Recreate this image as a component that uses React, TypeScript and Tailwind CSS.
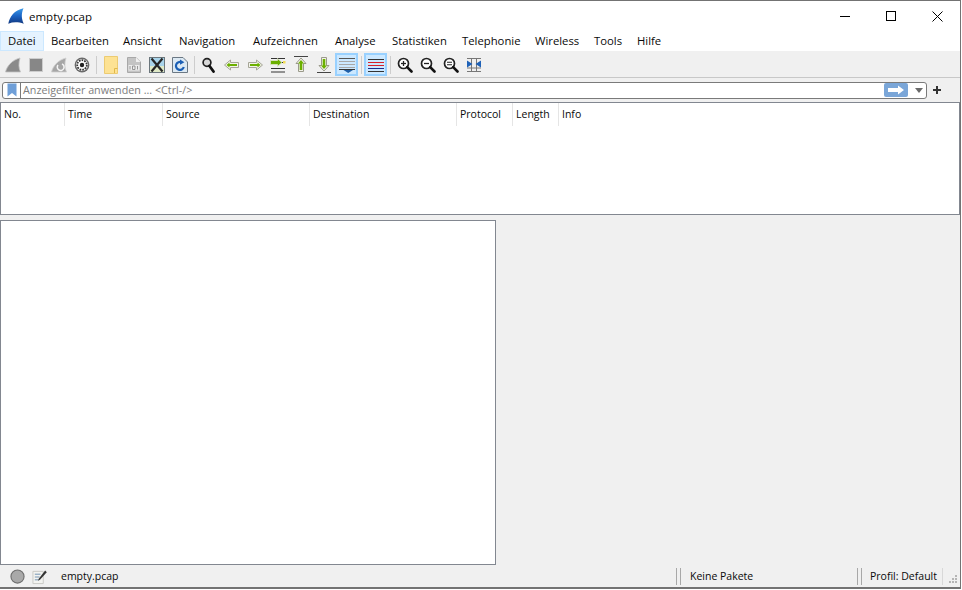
import type { ReactNode } from "react";

const menus = [
  { name: "Datei", cls: "w-[44px] pl-[7px] bg-[#e5f3ff] border border-[#cce8ff]" },
  { name: "Bearbeiten", cls: "w-[71px] pl-[7px]" },
  { name: "Ansicht", cls: "w-[56px] pl-[8px]" },
  { name: "Navigation", cls: "w-[74px] pl-[8px]" },
  { name: "Aufzeichnen", cls: "w-[82px] pl-[8px]" },
  { name: "Analyse", cls: "w-[57px] pl-[8px]" },
  { name: "Statistiken", cls: "w-[70px] pl-[8px]" },
  { name: "Telephonie", cls: "w-[73px] pl-[8px]" },
  { name: "Wireless", cls: "w-[59px] pl-[8px]" },
  { name: "Tools", cls: "w-[43px] pl-[8px]" },
  { name: "Hilfe", cls: "w-[41px] pl-[8px]" },
];

const columns = [
  { name: "No.", width: "w-[64px]" },
  { name: "Time", width: "w-[98px]" },
  { name: "Source", width: "w-[147px]" },
  { name: "Destination", width: "w-[147px]" },
  { name: "Protocol", width: "w-[56px]" },
  { name: "Length", width: "w-[46px]" },
];

const Glass = ({ sign }: { sign: "plus" | "minus" | "equal" }) => (
  <svg width="16" height="16" viewBox="0 0 16 16">
    <circle cx="6.5" cy="6.5" r="5" fill="#fff" stroke="#222" strokeWidth="1.7" />
    <path d="M10.2 10.2 L14.5 14.5" stroke="#111" strokeWidth="2.6" strokeLinecap="round" />
    {sign !== "equal" && <path d="M4 6.5 H9" stroke="#222" strokeWidth="1.3" />}
    {sign === "equal" && <path d="M4 5.3 H9 M4 7.7 H9" stroke="#222" strokeWidth="1.1" />}
    {sign === "plus" && <path d="M6.5 4 V9" stroke="#222" strokeWidth="1.3" />}
  </svg>
);

const Arrow = ({ flip }: { flip?: boolean }) => (
  <svg width="16" height="16" viewBox="0 0 16 16">
    <g transform={flip ? "rotate(180 8 8)" : undefined}>
      <path d="M15.5 8 L9.5 3 V5.5 H1.5 V10.5 H9.5 V13 Z" fill="#f2f2ea" stroke="#a5a596" strokeWidth="1" />
      <path d="M13.5 8 L10.5 5.5 V7 H3 V9 H10.5 V10.5 Z" fill="#6cb000" />
    </g>
  </svg>
);

const VerticalArrow = ({ up }: { up?: boolean }) => (
  <svg width="16" height="17" viewBox="0 0 16 17">
    <path d={up ? "M1 0.5 H15" : "M1 16.5 H15"} stroke="#444" strokeWidth="1" />
    <g transform={up ? undefined : "rotate(180 8 8.5)"}>
      <path d="M8 2 L13 7.5 H10.5 V15.5 H5.5 V7.5 H3 Z" fill="#f2f2ea" stroke="#9a9a8a" strokeWidth="1" />
      <path d="M8 4 L11 7.5 H9.3 V14 H6.7 V7.5 H5 Z" fill="#6cb000" />
    </g>
  </svg>
);

const icons: { key: string; node?: ReactNode; active?: boolean }[] = [
  {
    key: "start",
    node: (
      <svg width="16" height="16" viewBox="0 0 16 16">
        <path d="M0.5 15 C2 9 7 3 15 1 C13.5 6 13.5 11 15.5 15 Z" fill="#8a8a8a" stroke="#c4c4c4" strokeWidth="0.8" />
      </svg>
    ),
  },
  {
    key: "stop",
    node: (
      <svg width="16" height="16" viewBox="0 0 16 16">
        <rect x="1.5" y="1.5" width="13" height="13" fill="#878787" stroke="#cdcdcd" />
      </svg>
    ),
  },
  {
    key: "restart",
    node: (
      <svg width="16" height="16" viewBox="0 0 16 16">
        <path d="M0.5 15 C2 9 7 3 15 1 C13.5 6 13.5 11 15.5 15 Z" fill="#a6a6a6" stroke="#cfcfcf" strokeWidth="0.8" />
        <path d="M11 7 A3.4 3.4 0 1 1 7 8" fill="none" stroke="#f4f4f4" strokeWidth="1.5" />
      </svg>
    ),
  },
  {
    key: "options",
    node: (
      <svg width="16" height="16" viewBox="0 0 16 16">
        <circle cx="8" cy="8" r="7.4" fill="#6a6a6a" />
        <circle cx="8" cy="8" r="6" fill="#fff" />
        <circle cx="8" cy="8" r="4.8" fill="none" stroke="#333" strokeWidth="1.8" strokeDasharray="1.7 1" />
        <circle cx="8" cy="8" r="2.2" fill="#222" />
      </svg>
    ),
  },
  { key: "sep1" },
  {
    key: "open",
    node: (
      <svg width="14" height="18" viewBox="0 0 14 18">
        <path d="M0.5 0.5 H13.5 V17.5 H0.5 Z" fill="#fde293" stroke="#eccb72" />
        <path d="M10.5 17 V12.5 H13.5" fill="none" stroke="#e2b949" />
      </svg>
    ),
  },
  {
    key: "save",
    node: (
      <svg width="14" height="16" viewBox="0 0 14 16">
        <path d="M0.5 0.5 H9 L13.5 5 V15.5 H0.5 Z" fill="#c4c4c4" stroke="#a8a8a8" />
        <path d="M9 0.5 V5 H13.5 Z" fill="#f0f0f0" />
        <rect x="1.5" y="8" width="11" height="5.5" fill="#ededed" />
        <path d="M3 9 V12.5 M5.5 9 H8 V12.5 H5.5 Z M10.5 9 V12.5" stroke="#808080" strokeWidth="0.8" fill="none" />
      </svg>
    ),
  },
  {
    key: "close",
    node: (
      <svg width="16" height="16" viewBox="0 0 16 16">
        <rect x="0.5" y="0.5" width="15" height="15" fill="#a9d4ea" stroke="#6b767c" />
        <rect x="1" y="9" width="14" height="6" fill="#dfe9c6" />
        <path d="M2.5 1.5 L13.5 14.5 M13.5 1.5 L2.5 14.5" stroke="#262626" strokeWidth="2.2" />
      </svg>
    ),
  },
  {
    key: "reload",
    node: (
      <svg width="16" height="16" viewBox="0 0 16 16">
        <path d="M0.5 0.5 H11 L15.5 5 V15.5 H0.5 Z" fill="#dce9f3" stroke="#6b7884" />
        <path d="M11.8 10 A4 4 0 1 1 9.6 5.2" fill="none" stroke="#1b5fb5" strokeWidth="2.2" />
        <path d="M8 2.4 L12.4 5.2 L8 7.8 Z" fill="#1b5fb5" />
      </svg>
    ),
  },
  { key: "sep2" },
  {
    key: "find",
    node: (
      <svg width="16" height="16" viewBox="0 0 16 16">
        <circle cx="6" cy="5.5" r="3.9" fill="#d8d8d8" stroke="#222" strokeWidth="1.7" />
        <path d="M8.5 9 L12.5 14.5" stroke="#111" strokeWidth="2.8" strokeLinecap="round" />
      </svg>
    ),
  },
  { key: "back", node: <Arrow flip /> },
  { key: "forward", node: <Arrow /> },
  {
    key: "goto",
    node: (
      <svg width="16" height="16" viewBox="0 0 16 16">
        <path d="M1 1.5 H15 M9 5.5 H15 M1 11.5 H15 M1 15 H15" stroke="#333" strokeWidth="1" />
        <path d="M12 5.5 L7.5 1.5 V3.5 H0.5 V7.5 H7.5 V9.5 Z" fill="#6cb000" stroke="#dfe6cc" strokeWidth="0.8" />
        <rect x="13" y="4" width="2.5" height="2.5" fill="#f2dc55" />
      </svg>
    ),
  },
  { key: "first", node: <VerticalArrow up /> },
  { key: "last", node: <VerticalArrow /> },
  {
    key: "autoscroll",
    active: true,
    node: (
      <svg width="16" height="16" viewBox="0 0 16 16">
        <path d="M0 1.5 H16" stroke="#555" strokeWidth="1" />
        <path d="M0 4.5 H16 M0 7.5 H16 M0 10.5 H16" stroke="#a8a8a8" strokeWidth="1" />
        <path d="M0 12.5 H16" stroke="#333" strokeWidth="1" />
        <path d="M4.5 13 H14 L9.2 16 Z" fill="#1f5fa8" />
      </svg>
    ),
  },
  { key: "sep3" },
  {
    key: "colorize",
    active: true,
    node: (
      <svg width="16" height="16" viewBox="0 0 16 16">
        <path d="M0 2.5 H16" stroke="#333" strokeWidth="1" />
        <path d="M0 5.5 H16 M0 8.5 H16" stroke="#d8202a" strokeWidth="1" />
        <path d="M0 11.5 H16" stroke="#1c2d8c" strokeWidth="1" />
        <path d="M0 14.5 H16" stroke="#333" strokeWidth="1" />
      </svg>
    ),
  },
  { key: "sep4" },
  { key: "zoomin", node: <Glass sign="plus" /> },
  { key: "zoomout", node: <Glass sign="minus" /> },
  { key: "zoomreset", node: <Glass sign="equal" /> },
  {
    key: "resize",
    node: (
      <svg width="16" height="16" viewBox="0 0 16 16">
        <path d="M1 1.5 H15 M1 14.5 H15 M1 11 H15 M5.5 1.5 V14.5 M10.5 1.5 V14.5" stroke="#777" strokeWidth="1" fill="none" />
        <path d="M1 3.5 L6.5 7 L1 10.5 Z M15 3.5 L9.5 7 L15 10.5 Z" fill="#1f62b8" />
      </svg>
    ),
  },
];

const StatusDivider = () => (
  <div className="flex gap-[3px] h-[17px] shrink-0">
    <div className="w-px bg-[#a8a8a8]" />
    <div className="w-px bg-[#a8a8a8]" />
  </div>
);

export default function App() {
  return (
    <div className="h-[590px] w-[962px] bg-white overflow-hidden">
      <div
        className="h-[589px] w-[961px] flex flex-col bg-[#f0f0f0] border-t border-r border-[#737373] text-[10.5px] text-[#0a0a0a]"
        style={{ fontFamily: '"Open Sans", "Liberation Sans", sans-serif' }}
      >
        {/* Title bar */}
        <div className="h-[30px] shrink-0 bg-white flex items-center">
          <div className="w-[29px] flex justify-start pl-[8px]">
            <svg width="16" height="16" viewBox="0 0 16 16">
              <defs>
                <linearGradient id="fin" x1="0" y1="0" x2="0" y2="1">
                  <stop offset="0" stopColor="#3a9ae8" />
                  <stop offset="0.5" stopColor="#1a63c4" />
                  <stop offset="1" stopColor="#12387f" />
                </linearGradient>
              </defs>
              <path d="M0.3 15.7 C1.5 9 6.5 2 15.5 0.3 C13 6 13.5 11 15.8 15.7 C10 13.8 5 13.8 0.3 15.7 Z" fill="url(#fin)" />
            </svg>
          </div>
          <span className="text-[11.5px] pt-px">empty.pcap</span>
          <div className="ml-auto flex items-center">
            <div className="w-[46px] flex justify-center">
              <div className="w-[10px] h-px bg-black" />
            </div>
            <div className="w-[46px] flex justify-center">
              <div className="w-[10px] h-[10px] border border-black" />
            </div>
            <div className="w-[46px] flex justify-center">
              <svg width="11" height="11" viewBox="0 0 11 11">
                <path d="M0.5 0.5 L10.5 10.5 M10.5 0.5 L0.5 10.5" stroke="#000" strokeWidth="1" />
              </svg>
            </div>
          </div>
        </div>

        {/* Menu bar */}
        <div className="h-[21px] shrink-0 bg-white flex items-stretch border-b border-b-[#f0f0f0] text-[11.3px]">
          {menus.map((m) => (
            <div key={m.name} className={`${m.cls} shrink-0 flex items-center pt-px`}>
              {m.name}
            </div>
          ))}
        </div>

        {/* Main toolbar */}
        <div className="h-[26px] shrink-0 flex items-center pl-px border-b border-[#c8c8c8]">
          {icons.map((ic) =>
            ic.node ? (
              <div
                key={ic.key}
                className={
                  ic.active
                    ? "w-[23px] h-[23px] flex items-center justify-center bg-[#cce8ff] border-2 border-[#99d1ff]"
                    : "w-[23px] h-[23px] flex items-center justify-center"
                }
              >
                {ic.node}
              </div>
            ) : (
              <div key={ic.key} className="w-[6px] flex justify-center">
                <div className="w-px h-[18px] bg-[#cdcdcd]" />
              </div>
            ),
          )}
        </div>

        {/* Display filter */}
        <div className="h-[24px] shrink-0 flex items-center pl-[2px] pr-[16px] gap-[3px]">
          <div className="flex-1 h-[17px] bg-white border border-[#7a7a7a] rounded-[3px] flex items-center">
            <div className="w-[18px] h-full flex items-center justify-center border-r border-[#7a7a7a]">
              <svg width="10" height="14" viewBox="0 0 10 14">
                <path d="M0.5 0.5 H9.5 V13.5 L5 10 L0.5 13.5 Z" fill="#6f9fd8" />
              </svg>
            </div>
            <span className="pl-[2px] text-[#7d7d7d] text-[10.75px]">Anzeigefilter anwenden ... &lt;Ctrl-/&gt;</span>
            <div className="ml-auto w-[24px] h-[14px] rounded-[2px] bg-[#7aa6d8] flex items-center justify-center">
              <svg width="18" height="10" viewBox="0 0 18 10">
                <path d="M1 3 H11 V0.5 L17 5 L11 9.5 V7 H1 Z" fill="#fff" />
              </svg>
            </div>
            <div className="w-[18px] flex justify-center pl-[3px]">
              <svg width="8" height="5" viewBox="0 0 8 5">
                <path d="M0 0 H8 L4 5 Z" fill="#6a6a6a" />
              </svg>
            </div>
          </div>
          <svg width="14" height="14" viewBox="0 0 14 14">
            <path d="M7 3 V11 M3 7 H11" stroke="#333" strokeWidth="2" />
          </svg>
        </div>

        {/* Packet list */}
        <div className="h-[113px] shrink-0 bg-white border border-[#828790]">
          <div className="h-[23px] flex items-stretch">
            {columns.map((c) => (
              <div key={c.name} className={`${c.width} shrink-0 pl-[3px] flex items-center border-r border-[#e5e5e5]`}>
                {c.name}
              </div>
            ))}
            <div className="flex-1 pl-[3px] flex items-center">Info</div>
          </div>
        </div>

        {/* Detail pane */}
        <div className="flex-1 min-h-0 pt-[5px]">
          <div className="h-full w-[496px] bg-white border border-[#828790]" />
        </div>

        {/* Status bar */}
        <div className="h-[22px] shrink-0 flex items-center relative pt-[1px]">
          <div className="w-[25px] flex justify-end">
            <svg width="15" height="15" viewBox="0 0 16 16">
              <circle cx="8" cy="8" r="7" fill="#a9a9a9" stroke="#6f6f6f" strokeWidth="1.2" />
            </svg>
          </div>
          <div className="w-[22px] flex justify-end">
            <svg width="15" height="16" viewBox="0 0 16 16">
              <path d="M1 2 H12 V15 H1 Z" fill="#f3f3f0" stroke="#c9c9c4" />
              <path d="M3 5 H9 M3 8 H8 M3 11 H7" stroke="#6d8fb0" strokeWidth="1" />
              <path d="M7 10 L14 1 L15.8 2.8 L8.5 11 L6.5 12 Z" fill="#333" />
            </svg>
          </div>
          <span className="pl-[14px] pt-px">empty.pcap</span>
          <div className="ml-auto flex items-center pr-[17px]">
            <StatusDivider />
            <span className="w-[176px] pl-[9px] pt-px">Keine Pakete</span>
            <StatusDivider />
            <span className="w-[80px] pl-[8px] pt-px">Profil: Default</span>
            <div className="w-px h-[17px] bg-[#d8d8d8]" />
          </div>
          <svg width="10" height="10" viewBox="0 0 10 10" className="absolute right-[2px] bottom-[2px]">
            <path d="M7 0 h2 v2 h-2 Z M4 3 h2 v2 h-2 Z M7 3 h2 v2 h-2 Z M1 6 h2 v2 h-2 Z M4 6 h2 v2 h-2 Z M7 6 h2 v2 h-2 Z" fill="#b5b5b5" />
          </svg>
        </div>
        <div className="h-[2px] shrink-0 bg-[#737373]" />
      </div>
    </div>
  );
}
